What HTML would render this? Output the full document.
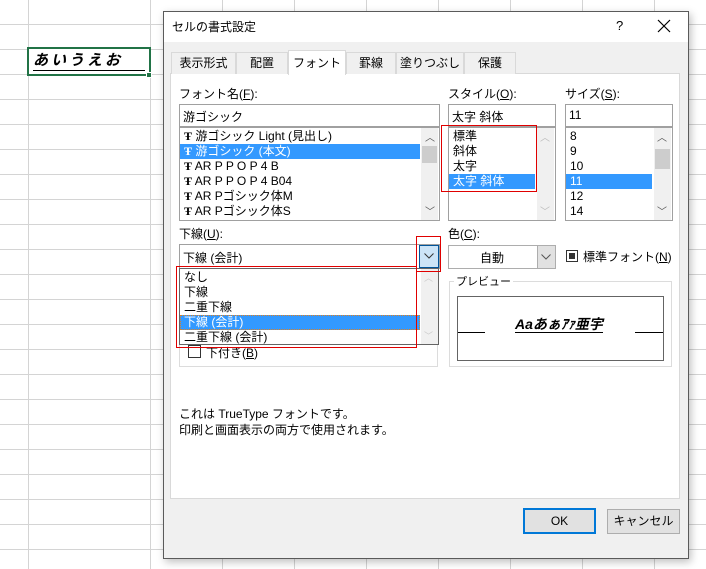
<!DOCTYPE html>
<html><head><meta charset="utf-8"><style>
*{margin:0;padding:0;box-sizing:border-box}
body{width:706px;height:569px;overflow:hidden;background:#fff;font-family:"Liberation Sans","Noto Sans CJK JP",sans-serif;font-size:12px;color:#000;position:relative}
.a{position:absolute;white-space:nowrap}
.grid{position:absolute;left:150px;top:0;width:556px;height:569px;
background-image:linear-gradient(to right,#d4d4d4 1px,transparent 1px),linear-gradient(to bottom,#d4d4d4 1px,transparent 1px);
background-size:72px 25px;background-position:0 -1px}
.grid0{position:absolute;left:0;top:0;width:150px;height:569px;
background-image:linear-gradient(to bottom,#d4d4d4 1px,transparent 1px);background-size:150px 25px;background-position:0 -1px}
.box{position:absolute;background:#fff;border:1px solid #a0a0a0}
.sb{position:absolute;background:#f0f0f0;width:17px}
.sel{background:#3399ff;color:#fff}
.lst div{height:15px;line-height:15px;padding-left:4px}
.red{position:absolute;border:1px solid #e00000}
.tab{position:absolute;top:52px;height:22px;border:1px solid #d9d9d9;border-bottom:none;background:#f0f0f0;text-align:center;line-height:20px}
u{text-decoration:underline}
</style></head><body>
<div class="grid0"></div>
<div class="grid"></div>
<div class="a" style="left:28px;top:0;width:1px;height:569px;background:#d4d4d4"></div>
<div class="a" style="left:27px;top:47px;width:124px;height:29px;border:2px solid #217346;background:#fff"></div>
<div class="a" style="left:146px;top:72px;width:6px;height:6px;background:#217346;border:1px solid #fff"></div>
<div class="a" style="left:33px;top:49px;font-size:15px;font-weight:bold;font-style:italic;letter-spacing:3px;border-bottom:1px solid #000;width:112px;height:22px">あいうえお</div>

<div class="a" style="left:163px;top:11px;width:526px;height:548px;background:#f0f0f0;border:1px solid #5a5a5a;box-shadow:2px 3px 8px rgba(0,0,0,.25)"></div>
<div class="a" style="left:164px;top:12px;width:524px;height:30px;background:#fff"></div>
<div class="a" style="left:172px;top:18px;font-size:12px">セルの書式設定</div>
<div class="a" style="left:616px;top:18px;font-size:13px">?</div>
<svg class="a" style="left:657px;top:19px" width="14" height="14"><path d="M1 1L13 13M13 1L1 13" stroke="#000" stroke-width="1.2"/></svg>

<div class="a" style="left:170px;top:73px;width:510px;height:426px;background:#fff;border:1px solid #d9d9d9"></div>
<div class="tab" style="left:171px;width:65px">表示形式</div>
<div class="tab" style="left:236px;width:52px">配置</div>
<div class="tab" style="left:346px;width:50px">罫線</div>
<div class="tab" style="left:396px;width:68px">塗りつぶし</div>
<div class="tab" style="left:464px;width:52px">保護</div>
<div class="tab" style="left:288px;top:50px;width:58px;height:25px;background:#fff;line-height:24px">フォント</div>

<div class="a" style="left:179px;top:85px">フォント名(<u>F</u>):</div>
<div class="box" style="left:179px;top:104px;width:261px;height:23px"></div>
<div class="a" style="left:183px;top:108px">游ゴシック</div>
<div class="box lst" style="left:179px;top:127px;width:261px;height:94px;padding-top:1px">
<div><b style="font-family:'Liberation Serif',serif">Ŧ</b> 游ゴシック Light (見出し)</div>
<div class="sel" style="width:240px"><b style="font-family:'Liberation Serif',serif">Ŧ</b> 游ゴシック (本文)</div>
<div><b style="font-family:'Liberation Serif',serif">Ŧ</b> AR P P O P 4 B</div>
<div><b style="font-family:'Liberation Serif',serif">Ŧ</b> AR P P O P 4 B04</div>
<div><b style="font-family:'Liberation Serif',serif">Ŧ</b> AR Pゴシック体M</div>
<div><b style="font-family:'Liberation Serif',serif">Ŧ</b> AR Pゴシック体S</div>
</div>
<div class="sb" style="left:421px;top:128px;height:92px"></div>
<div class="a" style="left:422px;top:146px;width:15px;height:17px;background:#cdcdcd"></div>
<div class="a" style="left:425px;top:129px;font-size:10px;color:#555">︿</div>
<div class="a" style="left:425px;top:203px;font-size:10px;color:#555">﹀</div>

<div class="a" style="left:448px;top:85px">スタイル(<u>O</u>):</div>
<div class="box" style="left:448px;top:104px;width:108px;height:23px"></div>
<div class="a" style="left:452px;top:108px">太字 斜体</div>
<div class="box lst" style="left:448px;top:127px;width:108px;height:94px;padding-top:1px">
<div>標準</div><div>斜体</div><div>太字</div><div class="sel" style="width:86px">太字 斜体</div></div>
<div class="sb" style="left:537px;top:128px;height:92px"></div>
<div class="a" style="left:540px;top:129px;font-size:10px;color:#bbb">︿</div>
<div class="a" style="left:540px;top:203px;font-size:10px;color:#bbb">﹀</div>
<div class="red" style="left:441px;top:125px;width:96px;height:67px"></div>

<div class="a" style="left:565px;top:85px">サイズ(<u>S</u>):</div>
<div class="box" style="left:565px;top:104px;width:108px;height:23px"></div>
<div class="a" style="left:569px;top:108px">11</div>
<div class="box lst" style="left:565px;top:127px;width:108px;height:94px;padding-top:1px">
<div>8</div><div>9</div><div>10</div><div class="sel" style="width:86px">11</div><div>12</div><div>14</div></div>
<div class="sb" style="left:654px;top:128px;height:92px"></div>
<div class="a" style="left:655px;top:149px;width:15px;height:20px;background:#cdcdcd"></div>
<div class="a" style="left:657px;top:129px;font-size:10px;color:#555">︿</div>
<div class="a" style="left:657px;top:203px;font-size:10px;color:#555">﹀</div>

<div class="a" style="left:179px;top:225px">下線(<u>U</u>):</div>
<div class="a" style="left:179px;top:281px;width:259px;height:86px;border:1px solid #dcdcdc"></div>
<div class="a" style="left:188px;top:345px;width:13px;height:13px;border:1px solid #333;background:#fff"></div>
<div class="a" style="left:206px;top:344px">下付き(<u>B</u>)</div>
<div class="box" style="left:179px;top:244px;width:261px;height:25px"></div>
<div class="a" style="left:183px;top:249px">下線 (会計)</div>
<div class="a" style="left:419px;top:245px;width:20px;height:23px;background:#cce4f7;border:1px solid #005499"></div>
<svg class="a" style="left:424px;top:253px" width="10" height="6"><path d="M0.5 0.5L5 5L9.5 0.5" stroke="#333" fill="none"/></svg>
<div class="box lst" style="left:179px;top:268px;width:260px;height:77px;border-color:#646464;padding-top:1px">
<div>なし</div><div>下線</div><div>二重下線</div><div class="sel" style="width:240px;outline:1px dotted #e08020;outline-offset:-1px">下線 (会計)</div><div>二重下線 (会計)</div></div>
<div class="sb" style="left:421px;top:269px;height:75px"></div>
<div class="a" style="left:424px;top:271px;font-size:9px;color:#ccc">︿</div>
<div class="a" style="left:424px;top:329px;font-size:9px;color:#ccc">﹀</div>
<div class="red" style="left:176px;top:266px;width:241px;height:82px"></div>
<div class="red" style="left:416px;top:236px;width:25px;height:36px"></div>

<div class="a" style="left:448px;top:225px">色(<u>C</u>):</div>
<div class="a" style="left:448px;top:245px;width:108px;height:24px;border:1px solid #adadad;background:#fff"></div>
<div class="a" style="left:448px;top:249px;width:88px;text-align:center">自動</div>
<div class="a" style="left:537px;top:246px;width:18px;height:22px;background:#e1e1e1;border-left:1px solid #adadad"></div>
<svg class="a" style="left:541px;top:254px" width="10" height="6"><path d="M0.5 0.5L5 5L9.5 0.5" stroke="#555" fill="none"/></svg>
<div class="a" style="left:566px;top:250px;width:12px;height:12px;border:1px solid #333;background:#fff"></div>
<div class="a" style="left:569px;top:253px;width:6px;height:6px;background:#333"></div>
<div class="a" style="left:583px;top:248px">標準フォント(<u>N</u>)</div>

<div class="a" style="left:449px;top:281px;width:223px;height:86px;border:1px solid #dcdcdc"></div>
<div class="a" style="left:454px;top:273px;background:#fff;padding:0 2px;font-size:11px">プレビュー</div>
<div class="a" style="left:457px;top:296px;width:207px;height:65px;border:1px solid #646464;background:#fff"></div>
<div class="a" style="left:458px;top:332px;width:27px;height:1px;background:#000"></div>
<div class="a" style="left:635px;top:332px;width:28px;height:1px;background:#000"></div>
<div class="a" style="left:515px;top:316px;font-weight:bold;font-style:italic;font-size:14px;border-bottom:1px solid #000;line-height:16px">Aaあぁｱｧ亜宇</div>

<div class="a" style="left:179px;top:405px">これは TrueType フォントです。</div>
<div class="a" style="left:179px;top:421px">印刷と画面表示の両方で使用されます。</div>

<div class="a" style="left:523px;top:508px;width:73px;height:26px;border:2px solid #0078d7;background:#e1e1e1;text-align:center;line-height:22px">OK</div>
<div class="a" style="left:607px;top:509px;width:73px;height:25px;border:1px solid #adadad;background:#e1e1e1;text-align:center;line-height:23px">キャンセル</div>
</body></html>
